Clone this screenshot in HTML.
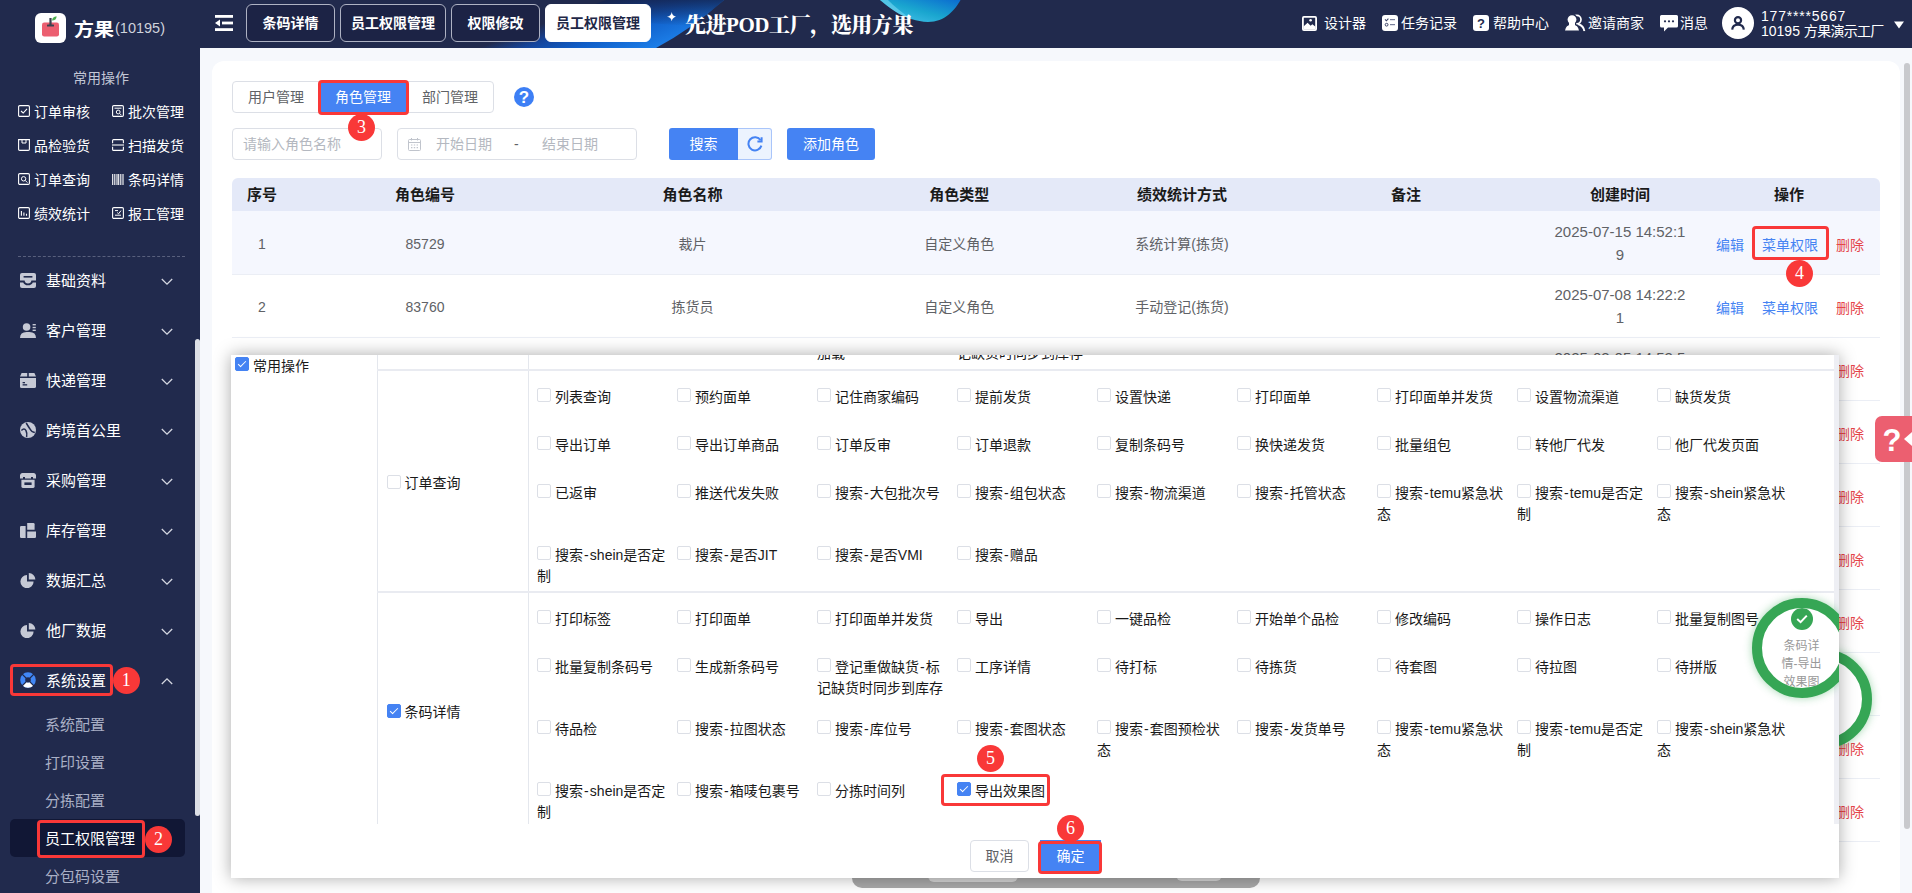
<!DOCTYPE html>
<html lang="zh-CN"><head><meta charset="utf-8"><title>员工权限管理</title>
<style>
*{box-sizing:border-box;margin:0;padding:0}
html,body{width:1912px;height:893px;overflow:hidden}
body{font-family:"Liberation Sans","Noto Sans CJK SC",sans-serif;font-size:14px;color:#303133;background:#f6f8fc;position:relative}
.a{position:absolute}
.t{position:absolute;white-space:nowrap;line-height:20px;height:20px}
svg{display:block}
/* header */
#hdr{left:0;top:0;width:1912px;height:48px;background:#212a4d}
#side{left:0;top:0;width:200px;height:893px;background:#212a4d}
.tab{position:absolute;top:4px;height:38px;border:1px solid #aeb2c3;border-radius:6px;background:#1c2345;color:#fff;font-weight:bold;font-size:14px;line-height:36px;text-align:center}
.tab.on{background:#fff;border-color:#fff;color:#1f2847}
.hi{position:absolute;color:#fff;font-size:14px;line-height:20px;top:13px;white-space:nowrap}
/* sidebar */
.q{position:absolute;color:#fff;font-size:14px;line-height:20px;white-space:nowrap}
.m{position:absolute;left:46px;color:#fff;font-size:15px;line-height:20px;white-space:nowrap}
.sm{position:absolute;left:45px;color:#aab0c6;font-size:15px;line-height:20px;white-space:nowrap}
.chev{position:absolute;left:161px;width:12px;height:8px}
/* annotations */
.rb{position:absolute;border:3px solid #f93838;border-radius:4px}
.rn{position:absolute;z-index:5;width:27px;height:27px;border-radius:13.5px;background:#f93838;color:#fff;font-family:"Liberation Serif","Noto Serif CJK SC",serif;font-weight:normal;font-size:18px;line-height:27px;text-align:center}
/* card */
#card{left:212px;top:61px;width:1688px;height:845px;background:#fff;border-radius:12px}
.seg{position:absolute;top:81px;height:32px;width:88px;border:1px solid #dcdfe6;background:#fff;color:#606266;font-size:14px;line-height:30px;text-align:center}
.inp{position:absolute;top:128px;height:32px;border:1px solid #dcdfe6;border-radius:4px;background:#fff}
.ph{position:absolute;color:#b4b8c0;font-size:14px;line-height:20px;top:5px;white-space:nowrap}
.btn{position:absolute;top:128px;height:32px;background:#4583f3;color:#fff;font-size:14px;line-height:32px;text-align:center;border-radius:3px}
.th{position:absolute;top:178px;height:33px;line-height:33px;font-weight:bold;font-size:15px;color:#1a1a1a;white-space:nowrap;transform:translateX(-50%)}
.td{position:absolute;font-size:14px;color:#606266;line-height:23px;white-space:nowrap;transform:translateX(-50%);text-align:center}
.lk{position:absolute;font-size:14px;line-height:20px;white-space:nowrap;color:#4583f3}
.del{position:absolute;font-size:14px;line-height:20px;white-space:nowrap;color:#e5444a}
.rl{position:absolute;left:232px;width:1648px;height:1px;background:#ebeef5}
/* modal */
#modal{left:231px;top:355px;width:1608px;height:523px;background:#fff;box-shadow:0 0 16px rgba(0,0,0,.34);overflow:hidden}
.cb{position:absolute;width:14px;height:14px;border:1px solid #dcdfe6;border-radius:2px;background:#fff}
.cb.on{background:#4583f3;border-color:#4583f3}
.cb.on:after{content:"";position:absolute;left:4px;top:1px;width:3px;height:7px;border:1.5px solid #fff;border-left:0;border-top:0;transform:rotate(45deg)}
.it{position:absolute;width:132px;font-size:14px;line-height:21px;color:#1a1a1a;white-space:normal;word-break:break-all}
.it i{display:inline-block;width:14px;height:14px;border:1px solid #dcdfe6;border-radius:2px;background:#fff;vertical-align:.3px;margin-right:4px;position:relative}
.it i.on{background:#4583f3;border-color:#4583f3}
.it i.on:after{content:"";position:absolute;left:4px;top:1px;width:3px;height:7px;border:1.5px solid #fff;border-left:0;border-top:0;transform:rotate(45deg)}
.it b{font-weight:normal;padding:0 1.1px}
.vl{position:absolute;width:1px;background:#e4e7ed}
.hl{position:absolute;height:2px;background:#e9ebf1}
</style></head><body>
<div id="hdr" class="a">
<svg class="a" style="left:440px;top:0" width="560" height="48" viewBox="440 0 560 48">
<defs>
<linearGradient id="g1" gradientUnits="userSpaceOnUse" x1="478" y1="48" x2="500" y2="106.5"><stop offset="0" stop-color="#212a4d"/><stop offset=".25" stop-color="#15449a"/><stop offset=".55" stop-color="#105ec8"/><stop offset="1" stop-color="#1c7fe9"/></linearGradient>
<linearGradient id="g2" x1="0" y1="1" x2="1" y2="0"><stop offset="0" stop-color="#4fc6ee"/><stop offset=".5" stop-color="#1aa6cf"/><stop offset="1" stop-color="#0b6bd0"/></linearGradient>
<linearGradient id="g3" x1="0" y1="0" x2="0" y2="1"><stop offset="0" stop-color="#14244f" stop-opacity=".8"/><stop offset="1" stop-color="#14244f" stop-opacity="0"/></linearGradient>
</defs>
<path d="M478 48 L606 0 L724 0 Q690 30 656 48 Z" fill="url(#g1)"/>
<path d="M606 0 L724 0 Q706 16 690 26 L560 17 Z" fill="url(#g3)"/>
<path d="M880 0 C890 8 905 21 928 22 C945 22 955 10 960.5 0 Z" fill="url(#g2)"/><path d="M880 0 C890 8 900 16 912 19.5 C902 13 894 6 888 0Z" fill="#7fdcf5" opacity=".55"/>
</svg>
<svg class="a" style="left:215px;top:14px" width="19" height="18" viewBox="0 0 19 18"><rect x="0" y="1" width="18" height="2.8" fill="#fff"/><rect x="7" y="7.6" width="11" height="2.8" fill="#fff"/><rect x="0" y="14.2" width="18" height="2.8" fill="#fff"/><path d="M0 9 L5 5.6 L5 12.4 Z" fill="#fff"/></svg>
<div class="tab" style="left:246px;width:89px">条码详情</div>
<div class="tab" style="left:340px;width:106px">员工权限管理</div>
<div class="tab" style="left:451px;width:89px">权限修改</div>
<div class="tab on" style="left:545px;width:106px">员工权限管理</div>
<svg class="a" style="left:666.5px;top:11.5px" width="9.5" height="9.5" viewBox="0 0 10 10"><path d="M5 0 Q5.6 4.4 10 5 Q5.6 5.6 5 10 Q4.4 5.6 0 5 Q4.4 4.4 5 0Z" fill="#fff"/></svg>
<div class="a" id="slogan" style="left:685px;top:10.3px;color:#fff;font-family:'Liberation Serif','Noto Serif CJK SC',serif;font-weight:900;font-size:21px;line-height:30px;white-space:nowrap;letter-spacing:-.45px">先进POD工厂，选用方果</div>
<!-- right icons -->
<svg class="a" style="left:1302px;top:16px" width="15" height="15" viewBox="0 0 15 15"><rect x=".9" y=".9" width="13.2" height="13.2" rx="1" fill="none" stroke="#fff" stroke-width="1.8"/><path d="M1.5 10.6 L5.6 6.8 L8.6 9.8 L10.4 8.2 L13.5 10.8 V13.5 H1.5Z" fill="#fff"/><circle cx="8.6" cy="4.3" r="1.3" fill="#fff"/></svg>
<div class="hi" style="left:1324px">设计器</div>
<svg class="a" style="left:1382px;top:15px" width="16" height="16" viewBox="0 0 16 16"><rect x="0" y="0" width="16" height="16" rx="3" fill="#fff"/><path d="M3 4.4 L4.4 5.8 L6.4 3.6" fill="none" stroke="#3a4266" stroke-width="1.1"/><rect x="8" y="4.1" width="5" height="1.1" fill="#6d7492"/><circle cx="4.6" cy="9.7" r="1.4" fill="none" stroke="#3a4266" stroke-width="1"/><rect x="8" y="9.1" width="5" height="1.1" fill="#6d7492"/></svg>
<div class="hi" style="left:1401px">任务记录</div>
<svg class="a" style="left:1473px;top:15px" width="16" height="16" viewBox="0 0 16 16"><rect x="0" y="0" width="16" height="16" rx="3" fill="#fff"/><text x="8" y="12.8" text-anchor="middle" font-family="Liberation Sans, sans-serif" font-weight="bold" font-size="13" fill="#212a4d">?</text></svg>
<div class="hi" style="left:1493px">帮助中心</div>
<svg class="a" style="left:1564px;top:14px" width="22" height="18" viewBox="0 0 22 18"><circle cx="12.8" cy="5.6" r="4.2" fill="none" stroke="#fff" stroke-width="1.7"/><path d="M14 10 Q19.8 11.8 20.4 17.4" fill="none" stroke="#fff" stroke-width="1.9"/><circle cx="8" cy="5.6" r="5.1" fill="#fff" stroke="#212a4d" stroke-width="1.3"/><path d="M.2 17.2 Q1 10 8 9.8 Q15 10 15.8 17.2Z" fill="#fff" stroke="#212a4d" stroke-width="1.2"/><rect x="5" y="8" width="6" height="4" fill="#fff"/><rect x="0" y="17.2" width="22" height="1" fill="#212a4d"/></svg>
<div class="hi" style="left:1588px">邀请商家</div>
<svg class="a" style="left:1660px;top:15px" width="18" height="17" viewBox="0 0 18 17"><path d="M1.5 0 H16.5 Q18 0 18 1.5 V11 Q18 12.5 16.5 12.5 H8 L4 16.5 V12.5 H1.5 Q0 12.5 0 11 V1.5 Q0 0 1.5 0Z" fill="#fff"/><circle cx="5" cy="6.3" r="1.1" fill="#212a4d"/><circle cx="9" cy="6.3" r="1.1" fill="#212a4d"/><circle cx="13" cy="6.3" r="1.1" fill="#212a4d"/></svg>
<div class="hi" style="left:1680px">消息</div>
<div class="a" style="left:1722px;top:7px;width:32px;height:32px;border-radius:16px;background:#fff"></div>
<svg class="a" style="left:1730px;top:15px" width="16" height="16" viewBox="0 0 16 16"><circle cx="8" cy="5.2" r="3.1" fill="none" stroke="#212a4d" stroke-width="2.2"/><path d="M2.2 14.6 Q2.6 9.6 8 9.6 Q13.4 9.6 13.8 14.6" fill="none" stroke="#212a4d" stroke-width="2.2"/></svg>
<div class="hi" style="left:1761px;top:6px;letter-spacing:.8px">177****5667</div>
<div class="hi" style="left:1761px;top:21px;">10195 <span style="letter-spacing:-.7px">方果演示工厂</span></div>
<svg class="a" style="left:1894px;top:21px" width="10" height="8" viewBox="0 0 10 8"><path d="M0 .5 H10 L5 7.5Z" fill="#fff"/></svg>
</div>
<div id="side" class="a">
<div class="a" style="left:35px;top:13px;width:31px;height:30px;border-radius:6px;background:#fff"></div>
<svg class="a" style="left:35px;top:12.4px" width="31" height="30" viewBox="0 0 31 30"><rect x="7" y="10.5" width="17" height="14" rx="2.2" fill="#ec5f70"/><rect x="14.4" y="6" width="2.2" height="8" fill="#3a4350"/><rect x="12" y="12.6" width="7" height="1.8" rx=".5" fill="#3a4350"/><path d="M17 8.6 Q17.4 4.6 21.6 4.2 Q21.6 8.4 17 8.6Z" fill="#4caf50"/></svg>
<div class="a" style="left:74px;top:15px;color:#fff;font-weight:bold;font-size:20px;line-height:28px;letter-spacing:0;transform:scaleY(.9);transform-origin:50% 80%">方果</div>
<div class="a" style="left:115px;top:15.6px;color:#cfd2dc;font-size:14.5px;line-height:24px;letter-spacing:0">(10195)</div>
<div class="a" style="left:0;top:67.6px;width:202px;text-align:center;color:#c3c7d6;font-size:14px;line-height:20px">常用操作</div>
<!-- quick links -->
<svg class="a" style="left:18px;top:105px" width="12" height="12" viewBox="0 0 12 12"><rect x=".6" y=".6" width="10.8" height="10.8" rx="1.2" fill="none" stroke="#fff" stroke-width="1.1"/><path d="M3 6 L5.2 8 L9 3.8" fill="none" stroke="#fff" stroke-width="1.1"/></svg>
<div class="q" style="left:34px;top:101.8px">订单审核</div>
<svg class="a" style="left:112px;top:105px" width="12" height="12" viewBox="0 0 12 12"><rect x=".6" y=".6" width="10.8" height="10.8" rx="1.2" fill="none" stroke="#fff" stroke-width="1.1"/><path d="M2.5 3.2 H9.5" stroke="#fff" stroke-width="1"/><circle cx="6.2" cy="7" r="1.9" fill="none" stroke="#fff" stroke-width="1"/><path d="M7.6 8.4 L9.4 10.2" stroke="#fff" stroke-width="1"/></svg>
<div class="q" style="left:128px;top:101.8px">批次管理</div>
<svg class="a" style="left:18px;top:139px" width="12" height="12" viewBox="0 0 12 12"><path d="M.6 .6 H11.4 V10.2 Q11.4 11.4 10.2 11.4 H1.8 Q.6 11.4 .6 10.2Z" fill="none" stroke="#fff" stroke-width="1.1"/><path d="M4 .6 V4 H8 V.6" fill="none" stroke="#fff" stroke-width="1"/></svg>
<div class="q" style="left:34px;top:135.8px">品检验货</div>
<svg class="a" style="left:112px;top:139px" width="12" height="12" viewBox="0 0 12 12"><path d="M.6 4.2 V1.6 Q.6 .6 1.6 .6 H10.4 Q11.4 .6 11.4 1.6 V4.2" fill="none" stroke="#fff" stroke-width="1.1"/><path d="M.6 7.8 V10.4 Q.6 11.4 1.6 11.4 H10.4 Q11.4 11.4 11.4 10.4 V7.8" fill="none" stroke="#fff" stroke-width="1.1"/><path d="M0 6 H12" stroke="#fff" stroke-width="1.1"/></svg>
<div class="q" style="left:128px;top:135.8px">扫描发货</div>
<svg class="a" style="left:18px;top:173px" width="12" height="12" viewBox="0 0 12 12"><rect x=".6" y=".6" width="10.8" height="10.8" rx="1.2" fill="none" stroke="#fff" stroke-width="1.1"/><circle cx="5.6" cy="5.8" r="2.2" fill="none" stroke="#fff" stroke-width="1"/><path d="M7.2 7.4 L9.4 9.6" stroke="#fff" stroke-width="1"/></svg>
<div class="q" style="left:34px;top:169.8px">订单查询</div>
<svg class="a" style="left:112px;top:174px" width="12" height="11" viewBox="0 0 12 11"><path d="M.7 0 V11 M2.8 0 V11 M5 0 V11 M6.7 0 V11 M8.8 0 V11 M11 0 V11" stroke="#fff" stroke-width="1.1"/></svg>
<div class="q" style="left:128px;top:169.8px">条码详情</div>
<svg class="a" style="left:18px;top:207px" width="12" height="12" viewBox="0 0 12 12"><rect x=".6" y=".6" width="10.8" height="10.8" rx="1.2" fill="none" stroke="#fff" stroke-width="1.1"/><path d="M3.4 8.8 V4 M5.9 8.8 V5.6 M8.5 8.8 V6.8" stroke="#fff" stroke-width="1.1"/></svg>
<div class="q" style="left:34px;top:203.8px">绩效统计</div>
<svg class="a" style="left:112px;top:207px" width="12" height="12" viewBox="0 0 12 12"><rect x=".6" y=".6" width="10.8" height="10.8" rx="1.2" fill="none" stroke="#fff" stroke-width="1.1"/><path d="M3 3.6 H6 M3 8.2 H9" stroke="#fff" stroke-width="1"/><path d="M5.2 5.6 L6.6 6.8 L9 3.6" fill="none" stroke="#fff" stroke-width="1"/></svg>
<div class="q" style="left:128px;top:203.8px">报工管理</div>
<div class="a" style="left:18px;top:256px;width:167px;height:0;border-top:1px dashed #59607d"></div>
<svg class="a" style="left:20px;top:272.5px" width="16" height="15" viewBox="0 0 16 15"><rect x="0" y="0" width="16" height="15" rx="2" fill="#c6c9d5"/><rect x="3.6" y="3" width="8.8" height="1.6" fill="#212a4d"/><path d="M0 7.6 H4.6 Q5 10.6 8 10.6 Q11 10.6 11.4 7.6 H16 V9.4 H12.8 Q11.6 12.2 8 12.2 Q4.4 12.2 3.2 9.4 H0Z" fill="#212a4d"/></svg>
<div class="m" style="top:271.2px">基础资料</div>
<svg class="chev" style="top:278.4px" viewBox="0 0 12 8"><path d="M.8 1 L6 6.2 L11.2 1" fill="none" stroke="#d5d8e2" stroke-width="1.3"/></svg>
<svg class="a" style="left:20px;top:322.5px" width="16" height="15" viewBox="0 0 16 15"><circle cx="6.6" cy="4" r="3.8" fill="#c6c9d5"/><path d="M0 15 Q0 9 6.6 9 H9.4 Q16 9 16 15Z" fill="#c6c9d5"/><rect x="12.6" y="1" width="3.2" height="1.4" fill="#c6c9d5"/><rect x="12.6" y="3.8" width="3.2" height="1.4" fill="#c6c9d5"/><rect x="12.6" y="6.6" width="3.2" height="1.4" fill="#c6c9d5"/></svg>
<div class="m" style="top:321.2px">客户管理</div>
<svg class="chev" style="top:328.4px" viewBox="0 0 12 8"><path d="M.8 1 L6 6.2 L11.2 1" fill="none" stroke="#d5d8e2" stroke-width="1.3"/></svg>
<svg class="a" style="left:20px;top:372.5px" width="16" height="15" viewBox="0 0 16 15"><path d="M1.6 0 H7.2 V3.6 H0 Z M8.8 0 H14.4 L16 3.6 H8.8Z" fill="#c6c9d5"/><path d="M0 5 H16 V13.4 Q16 15 14.4 15 H1.6 Q0 15 0 13.4Z" fill="#c6c9d5"/><rect x="2.6" y="9" width="2.4" height="1.3" fill="#212a4d"/><rect x="2.6" y="11.2" width="4.6" height="1.3" fill="#212a4d"/></svg>
<div class="m" style="top:371.2px">快递管理</div>
<svg class="chev" style="top:378.4px" viewBox="0 0 12 8"><path d="M.8 1 L6 6.2 L11.2 1" fill="none" stroke="#d5d8e2" stroke-width="1.3"/></svg>
<svg class="a" style="left:20px;top:422.0px" width="16" height="16" viewBox="0 0 16 16"><circle cx="8" cy="8" r="8" fill="#c6c9d5"/><path d="M1.4 8.5 Q4.2 5.6 6 8.6 Q7.4 11.4 6.6 15" fill="none" stroke="#212a4d" stroke-width="1.5"/><path d="M6.2 1 Q8 4 10 7 Q11.6 10.2 14.8 10.6" fill="none" stroke="#212a4d" stroke-width="1.5"/></svg>
<div class="m" style="top:421.2px">跨境首公里</div>
<svg class="chev" style="top:428.4px" viewBox="0 0 12 8"><path d="M.8 1 L6 6.2 L11.2 1" fill="none" stroke="#d5d8e2" stroke-width="1.3"/></svg>
<svg class="a" style="left:20px;top:472.5px" width="16" height="15" viewBox="0 0 16 15"><path d="M2.4 0 H13.6 Q15.4 0 16 2 V5.4 H13 V4 H11 V5.4 H5 V4 H3 V5.4 H0 V2 Q.6 0 2.4 0Z" fill="#c6c9d5"/><path d="M1.4 6.8 H14.6 V13.6 Q14.6 15 13.2 15 H2.8 Q1.4 15 1.4 13.6Z" fill="#c6c9d5"/><rect x="4.4" y="9.4" width="7.2" height="2.6" fill="#212a4d"/></svg>
<div class="m" style="top:471.2px">采购管理</div>
<svg class="chev" style="top:478.4px" viewBox="0 0 12 8"><path d="M.8 1 L6 6.2 L11.2 1" fill="none" stroke="#d5d8e2" stroke-width="1.3"/></svg>
<svg class="a" style="left:20px;top:522.5px" width="16" height="15" viewBox="0 0 16 15"><path d="M1.2 3 H5.6 V15 H1.2 Q0 15 0 13.8 V4.2 Q0 3 1.2 3Z" fill="#c6c9d5"/><path d="M7.2 8.4 H16 V13.8 Q16 15 14.8 15 H7.2Z" fill="#c6c9d5"/><path d="M7.2 0 H13.4 Q14.6 0 14.6 1.2 V6.8 H7.2Z" fill="#c6c9d5"/></svg>
<div class="m" style="top:521.2px">库存管理</div>
<svg class="chev" style="top:528.4px" viewBox="0 0 12 8"><path d="M.8 1 L6 6.2 L11.2 1" fill="none" stroke="#d5d8e2" stroke-width="1.3"/></svg>
<svg class="a" style="left:20px;top:572.5px" width="16" height="15" viewBox="0 0 16 15"><path d="M7 2 A6.6 6.6 0 1 0 13.6 8.6 H7Z" fill="#c6c9d5"/><path d="M8.8 0 A6.6 6.6 0 0 1 15.4 6.6 H8.8Z" fill="#c6c9d5"/></svg>
<div class="m" style="top:571.2px">数据汇总</div>
<svg class="chev" style="top:578.4px" viewBox="0 0 12 8"><path d="M.8 1 L6 6.2 L11.2 1" fill="none" stroke="#d5d8e2" stroke-width="1.3"/></svg>
<svg class="a" style="left:20px;top:622.5px" width="16" height="15" viewBox="0 0 16 15"><path d="M7 2 A6.6 6.6 0 1 0 13.6 8.6 H7Z" fill="#c6c9d5"/><path d="M8.8 0 A6.6 6.6 0 0 1 15.4 6.6 H8.8Z" fill="#c6c9d5"/></svg>
<div class="m" style="top:621.2px">他厂数据</div>
<svg class="chev" style="top:628.4px" viewBox="0 0 12 8"><path d="M.8 1 L6 6.2 L11.2 1" fill="none" stroke="#d5d8e2" stroke-width="1.3"/></svg>
<svg class="a" style="left:20px;top:672.0px" width="16" height="16" viewBox="0 0 16 16"><circle cx="8" cy="8" r="5.3" fill="none" stroke="#4187f6" stroke-width="5"/><path d="M11.75 11.75 A5.3 5.3 0 0 1 4.25 11.75" fill="none" stroke="#fff" stroke-width="5"/><path d="M2 2 L14 14 M14 2 L2 14" stroke="#212a4d" stroke-width="1.1"/></svg>
<div class="m" style="top:671.2px">系统设置</div>
<svg class="chev" style="top:676.9px" viewBox="0 0 12 8"><path d="M.8 7 L6 1.8 L11.2 7" fill="none" stroke="#d5d8e2" stroke-width="1.3"/></svg>
<div class="a" style="left:10px;top:819px;width:175px;height:38px;border-radius:5px;background:#111735"></div>
<div class="sm" style="top:715.3px">系统配置</div>
<div class="sm" style="top:753.3px">打印设置</div>
<div class="sm" style="top:791.3px">分拣配置</div>
<div class="sm" style="top:829.3px;color:#fff">员工权限管理</div>
<div class="sm" style="top:867.3px">分包码设置</div>
<div class="a" style="left:195px;top:339px;width:5px;height:477px;border-radius:2.5px;background:#dcdfe6"></div>
<div class="rb" style="left:10px;top:664px;width:102.5px;height:31.5px"></div>
<div class="rn" style="left:112.7px;top:666.8px">1</div>
<div class="rb" style="left:36.8px;top:820.4px;width:108px;height:37.2px"></div>
<div class="rn" style="left:145.1px;top:825.8px">2</div>
</div>
<div id="card" class="a"></div>
<div class="a" style="left:1904px;top:63px;width:6px;height:766px;border-radius:3px;background:#c8c9cd"></div>
<div class="seg" style="left:232px;border-radius:4px 0 0 4px">用户管理</div>
<div class="seg" style="left:406px;border-radius:0 4px 4px 0">部门管理</div>
<div class="seg" style="left:319px;background:#4583f3;border-color:#4583f3;color:#fff">角色管理</div>
<div class="rb" style="left:317.7px;top:80.3px;width:91.5px;height:34.9px"></div>
<div class="rn" style="left:348px;top:114.2px">3</div>
<div class="a" style="left:514px;top:87px;width:20px;height:20px;border-radius:10px;background:#3d7ff5;color:#fff;font-weight:bold;font-size:17px;line-height:21px;text-align:center">?</div>
<div class="inp" style="left:232px;width:150px"><div class="ph" style="left:10px">请输入角色名称</div></div>
<div class="inp" style="left:397px;width:240px"><svg class="a" style="left:10px;top:9px" width="13" height="13" viewBox="0 0 13 13"><rect x=".5" y="1.5" width="12" height="11" rx="1" fill="none" stroke="#c0c4cc" stroke-width="1"/><path d="M.5 4.5 H12.5" stroke="#c0c4cc"/><path d="M3.5 0 V2.5 M9.5 0 V2.5" stroke="#c0c4cc"/><path d="M3 7 H4.4 M5.8 7 H7.2 M8.6 7 H10 M3 9.6 H4.4 M5.8 9.6 H7.2 M8.6 9.6 H10" stroke="#c0c4cc" stroke-width="1.1"/></svg><div class="ph" style="left:38px">开始日期</div><div class="ph" style="left:116px;color:#606266">-</div><div class="ph" style="left:144px">结束日期</div></div>
<div class="btn" style="left:669px;width:69px;border-radius:3px 0 0 3px">搜索</div>
<div class="a" style="left:738px;top:128px;width:34px;height:32px;border:1px solid #a9c5fa;border-left:0;border-radius:0 3px 3px 0;background:#ecf3fe"></div>
<svg class="a" style="left:747px;top:136px" width="16" height="16" viewBox="0 0 16 16"><path d="M13.6 4.2 A6.6 6.6 0 1 0 14.4 9.6" fill="none" stroke="#4583f3" stroke-width="2"/><path d="M14.6 1.2 V5.4 H10.4" fill="none" stroke="#4583f3" stroke-width="2"/></svg>
<div class="btn" style="left:787px;width:88px">添加角色</div>
<div class="a" style="left:232px;top:178px;width:1648px;height:33.6px;background:#e4e9f8;border-radius:6px 6px 0 0"></div>
<div class="th" style="left:262px">序号</div>
<div class="th" style="left:425px">角色编号</div>
<div class="th" style="left:692.5px">角色名称</div>
<div class="th" style="left:959.3px">角色类型</div>
<div class="th" style="left:1182px">绩效统计方式</div>
<div class="th" style="left:1406px">备注</div>
<div class="th" style="left:1620px">创建时间</div>
<div class="th" style="left:1789px">操作</div>
<div class="a" style="left:232px;top:211px;width:1648px;height:63px;background:#f5f7fe"></div>
<div class="rl" style="top:274px"></div>
<div class="rl" style="top:337px"></div>
<div class="rl" style="top:400px"></div>
<div class="rl" style="top:463px"></div>
<div class="rl" style="top:526px"></div>
<div class="rl" style="top:589px"></div>
<div class="rl" style="top:652px"></div>
<div class="rl" style="top:715px"></div>
<div class="rl" style="top:778px"></div>
<div class="rl" style="top:841px"></div>
<div class="td" style="left:262px;top:232.7px">1</div>
<div class="td" style="left:425px;top:232.7px">85729</div>
<div class="td" style="left:692.5px;top:232.7px">裁片</div>
<div class="td" style="left:959.3px;top:232.7px">自定义角色</div>
<div class="td" style="left:1182px;top:232.7px">系统计算(拣货)</div>
<div class="td" style="left:1620px;top:219.9px;font-size:15px">2025-07-15 14:52:1<br>9</div>
<div class="lk" style="left:1716px;top:235.4px">编辑</div>
<div class="lk" style="left:1762px;top:235.4px">菜单权限</div>
<div class="del" style="left:1836px;top:235.4px">删除</div>
<div class="td" style="left:262px;top:295.7px">2</div>
<div class="td" style="left:425px;top:295.7px">83760</div>
<div class="td" style="left:692.5px;top:295.7px">拣货员</div>
<div class="td" style="left:959.3px;top:295.7px">自定义角色</div>
<div class="td" style="left:1182px;top:295.7px">手动登记(拣货)</div>
<div class="td" style="left:1620px;top:282.9px;font-size:15px">2025-07-08 14:22:2<br>1</div>
<div class="lk" style="left:1716px;top:298.4px">编辑</div>
<div class="lk" style="left:1762px;top:298.4px">菜单权限</div>
<div class="del" style="left:1836px;top:298.4px">删除</div>
<div class="td" style="left:1620px;top:346px;font-size:15px">2025-03-05 14:53:5</div>
<div class="del" style="left:1836px;top:361.4px">删除</div>
<div class="del" style="left:1836px;top:424.4px">删除</div>
<div class="del" style="left:1836px;top:487.4px">删除</div>
<div class="del" style="left:1836px;top:550.4px">删除</div>
<div class="del" style="left:1836px;top:613.4px">删除</div>
<div class="del" style="left:1836px;top:676.4px">删除</div>
<div class="del" style="left:1836px;top:739.4px">删除</div>
<div class="del" style="left:1836px;top:802.4px">删除</div>
<div class="rb" style="left:1751.6px;top:226.1px;width:77.6px;height:34.3px"></div>
<div class="rn" style="left:1786.1px;top:260.1px">4</div>
<div class="a" style="left:1771.5px;top:648.5px;width:100px;height:100px;border-radius:50px;border:10px solid #36a655;background:#fff;box-shadow:0 0 8px rgba(54,166,85,.45)"></div>
<div class="a" style="left:1875px;top:416px;width:40px;height:46px;border-radius:7px 0 0 7px;background:#ec5f70"></div>
<div class="a" style="left:1879px;top:419.5px;width:26px;color:#fff;font-weight:bold;font-size:31px;line-height:42px;text-align:center">?</div>
<svg class="a" style="left:1904px;top:432px" width="8" height="14" viewBox="0 0 8 14"><path d="M8 0 L0 7 L8 14Z" fill="#fff"/></svg>
<div class="a" style="left:852px;top:868px;width:408px;height:20px;border-radius:10px;background:#a9a9a9"></div>
<div class="a" style="left:928px;top:866px;width:90px;height:16px;border-radius:6px;background:#d6d6d6"></div>
<div class="a" style="left:1176px;top:866px;width:46px;height:15px;border-radius:6px;background:#d6d6d6"></div>
<div id="modal" class="a">
<div class="a" style="left:1603px;top:0;width:5px;height:469px;background:#eeeff4"></div>
<div class="vl" style="left:146px;top:0;height:469px"></div>
<div class="vl" style="left:297.4px;top:0;height:469px"></div>
<div class="hl" style="left:146px;top:13.6px;width:1457px"></div>
<div class="hl" style="left:146px;top:235.6px;width:1457px"></div>
<div class="cb on" style="left:4px;top:2px"></div>
<div class="t" style="left:22px;top:1.0px;color:#1a1a1a">常用操作</div>
<div class="cb" style="left:155.5px;top:119.5px"></div>
<div class="t" style="left:173.5px;top:117.6px;color:#1a1a1a">订单查询</div>
<div class="cb on" style="left:155.5px;top:348.5px"></div>
<div class="t" style="left:173.5px;top:347.2px;color:#1a1a1a">条码详情</div>
<div class="it" style="left:586px;top:-12.3px">加载</div>
<div class="it" style="left:726px;top:-12.3px">记缺货时同步到库存</div>
<div class="it" style="left:306px;top:32.4px"><i></i>列表查询</div>
<div class="it" style="left:446px;top:32.4px"><i></i>预约面单</div>
<div class="it" style="left:586px;top:32.4px"><i></i>记住商家编码</div>
<div class="it" style="left:726px;top:32.4px"><i></i>提前发货</div>
<div class="it" style="left:866px;top:32.4px"><i></i>设置快递</div>
<div class="it" style="left:1006px;top:32.4px"><i></i>打印面单</div>
<div class="it" style="left:1146px;top:32.4px"><i></i>打印面单并发货</div>
<div class="it" style="left:1286px;top:32.4px"><i></i>设置物流渠道</div>
<div class="it" style="left:1426px;top:32.4px"><i></i>缺货发货</div>
<div class="it" style="left:306px;top:80.4px"><i></i>导出订单</div>
<div class="it" style="left:446px;top:80.4px"><i></i>导出订单商品</div>
<div class="it" style="left:586px;top:80.4px"><i></i>订单反审</div>
<div class="it" style="left:726px;top:80.4px"><i></i>订单退款</div>
<div class="it" style="left:866px;top:80.4px"><i></i>复制条码号</div>
<div class="it" style="left:1006px;top:80.4px"><i></i>换快递发货</div>
<div class="it" style="left:1146px;top:80.4px"><i></i>批量组包</div>
<div class="it" style="left:1286px;top:80.4px"><i></i>转他厂代发</div>
<div class="it" style="left:1426px;top:80.4px"><i></i>他厂代发页面</div>
<div class="it" style="left:306px;top:128.4px"><i></i>已返审</div>
<div class="it" style="left:446px;top:128.4px"><i></i>推送代发失败</div>
<div class="it" style="left:586px;top:128.4px"><i></i>搜索<b>-</b>大包批次号</div>
<div class="it" style="left:726px;top:128.4px"><i></i>搜索<b>-</b>组包状态</div>
<div class="it" style="left:866px;top:128.4px"><i></i>搜索<b>-</b>物流渠道</div>
<div class="it" style="left:1006px;top:128.4px"><i></i>搜索<b>-</b>托管状态</div>
<div class="it" style="left:1146px;top:128.4px"><i></i>搜索<b>-</b>temu紧急状态</div>
<div class="it" style="left:1286px;top:128.4px"><i></i>搜索<b>-</b>temu是否定制</div>
<div class="it" style="left:1426px;top:128.4px"><i></i>搜索<b>-</b>shein紧急状态</div>
<div class="it" style="left:306px;top:190.4px"><i></i>搜索<b>-</b>shein是否定制</div>
<div class="it" style="left:446px;top:190.4px"><i></i>搜索<b>-</b>是否JIT</div>
<div class="it" style="left:586px;top:190.4px"><i></i>搜索<b>-</b>是否VMI</div>
<div class="it" style="left:726px;top:190.4px"><i></i>搜索<b>-</b>赠品</div>
<div class="it" style="left:306px;top:254.4px"><i></i>打印标签</div>
<div class="it" style="left:446px;top:254.4px"><i></i>打印面单</div>
<div class="it" style="left:586px;top:254.4px"><i></i>打印面单并发货</div>
<div class="it" style="left:726px;top:254.4px"><i></i>导出</div>
<div class="it" style="left:866px;top:254.4px"><i></i>一键品检</div>
<div class="it" style="left:1006px;top:254.4px"><i></i>开始单个品检</div>
<div class="it" style="left:1146px;top:254.4px"><i></i>修改编码</div>
<div class="it" style="left:1286px;top:254.4px"><i></i>操作日志</div>
<div class="it" style="left:1426px;top:254.4px"><i></i>批量复制图号</div>
<div class="it" style="left:306px;top:302.4px"><i></i>批量复制条码号</div>
<div class="it" style="left:446px;top:302.4px"><i></i>生成新条码号</div>
<div class="it" style="left:586px;top:302.4px"><i></i>登记重做缺货<b>-</b>标记缺货时同步到库存</div>
<div class="it" style="left:726px;top:302.4px"><i></i>工序详情</div>
<div class="it" style="left:866px;top:302.4px"><i></i>待打标</div>
<div class="it" style="left:1006px;top:302.4px"><i></i>待拣货</div>
<div class="it" style="left:1146px;top:302.4px"><i></i>待套图</div>
<div class="it" style="left:1286px;top:302.4px"><i></i>待拉图</div>
<div class="it" style="left:1426px;top:302.4px"><i></i>待拼版</div>
<div class="it" style="left:306px;top:364.4px"><i></i>待品检</div>
<div class="it" style="left:446px;top:364.4px"><i></i>搜索<b>-</b>拉图状态</div>
<div class="it" style="left:586px;top:364.4px"><i></i>搜索<b>-</b>库位号</div>
<div class="it" style="left:726px;top:364.4px"><i></i>搜索<b>-</b>套图状态</div>
<div class="it" style="left:866px;top:364.4px"><i></i>搜索<b>-</b>套图预检状态</div>
<div class="it" style="left:1006px;top:364.4px"><i></i>搜索<b>-</b>发货单号</div>
<div class="it" style="left:1146px;top:364.4px"><i></i>搜索<b>-</b>temu紧急状态</div>
<div class="it" style="left:1286px;top:364.4px"><i></i>搜索<b>-</b>temu是否定制</div>
<div class="it" style="left:1426px;top:364.4px"><i></i>搜索<b>-</b>shein紧急状态</div>
<div class="it" style="left:306px;top:426.4px"><i></i>搜索<b>-</b>shein是否定制</div>
<div class="it" style="left:446px;top:426.4px"><i></i>搜索<b>-</b>箱唛包裹号</div>
<div class="it" style="left:586px;top:426.4px"><i></i>分拣时间列</div>
<div class="it" style="left:726px;top:426.4px"><i class="on"></i>导出效果图</div>
<div class="a" style="left:1520.5px;top:242.5px;width:100px;height:100px;border-radius:50px;border:10px solid #36a655;background:#fff;box-shadow:0 0 8px rgba(54,166,85,.45);overflow:hidden"><div class="a" style="left:29px;top:0px;width:22px;height:22px;border-radius:11px;background:#36a655"></div><svg class="a" style="left:34px;top:6px" width="12" height="10" viewBox="0 0 12 10"><path d="M1.2 5 L4.6 8.2 L10.8 1.6" fill="none" stroke="#fff" stroke-width="2"/></svg><div class="a" style="left:18.5px;top:29px;width:43px;text-align:center;word-break:break-all;color:#999;font-size:12px;line-height:18px">条码详情-导出效果图</div></div>
<div class="rb" style="left:710.4px;top:419.4px;width:108.8px;height:31.6px"></div>
<div class="rn" style="left:746px;top:389.6px">5</div>
<div class="a" style="left:0;top:469px;width:1608px;height:54px;background:#fff"></div>
<div class="a" style="left:739px;top:485px;width:59px;height:32px;border:1px solid #dcdfe6;border-radius:4px;color:#606266;font-size:14px;line-height:30px;text-align:center">取消</div>
<div class="a" style="left:809px;top:485px;width:61px;height:32px;background:#4583f3;color:#fff;font-size:14px;line-height:33px;text-align:center">确定</div>
<div class="rb" style="left:807px;top:485.5px;width:64.4px;height:33.3px"></div>
<div class="rn" style="left:826.1px;top:460px">6</div>
</div>
</body></html>
